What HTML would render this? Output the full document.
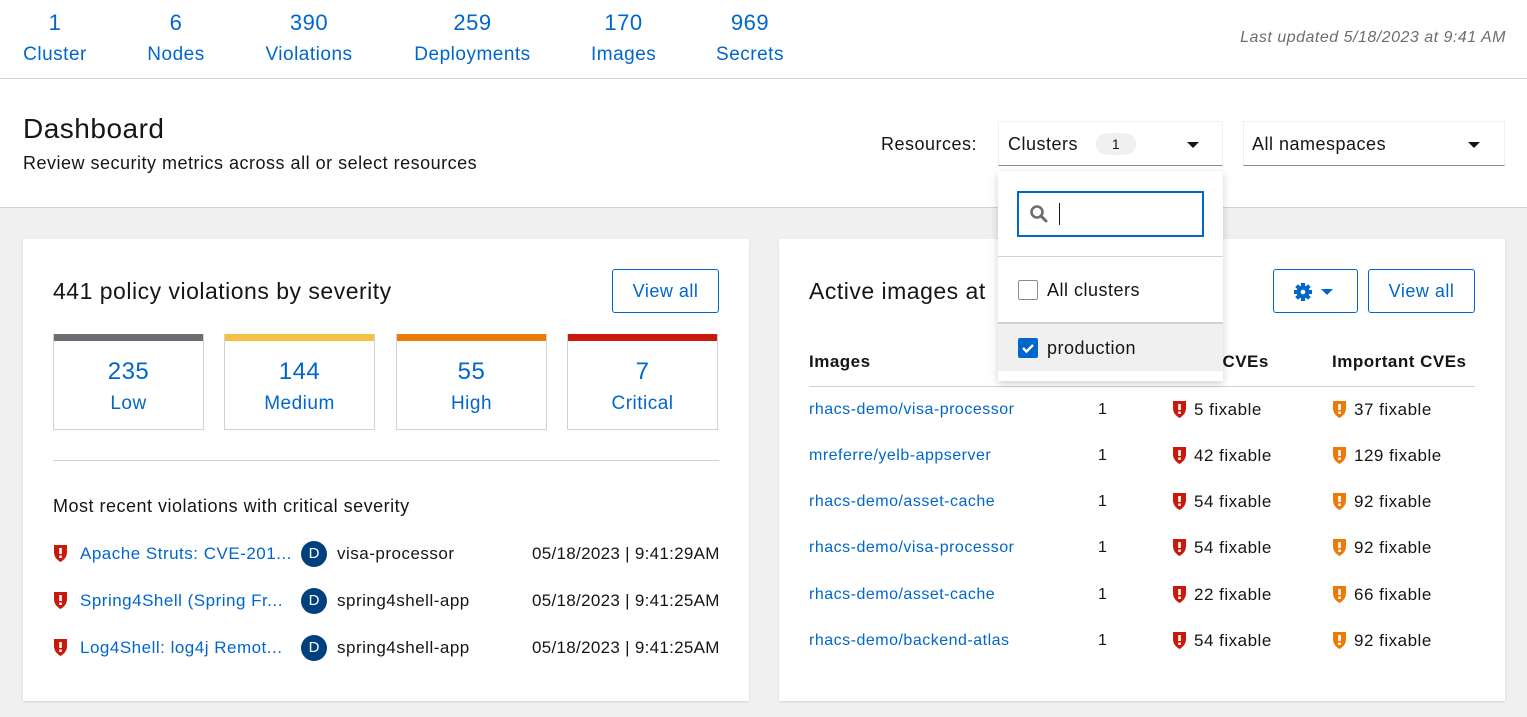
<!DOCTYPE html>
<html><head><meta charset="utf-8"><style>
*{box-sizing:border-box;margin:0;padding:0}
html{width:1527px;height:717px;overflow:hidden}
body{width:1527px;height:717px;overflow:hidden;background:#f0f0f0;font-family:"Liberation Sans",sans-serif;color:#151515;position:relative;letter-spacing:0.5px}
.a{position:absolute;white-space:nowrap}
.blue{color:#0066cc}
.top{position:absolute;left:0;top:0;width:1527px;height:79px;background:#fff;border-bottom:1px solid #d2d2d2}
.hdr{position:absolute;left:0;top:79px;width:1527px;height:129px;background:#fff;border-bottom:1px solid #d2d2d2}
.stat{position:absolute;top:10px;text-align:center;color:#0066cc}
.stat b{display:block;font-weight:normal;font-size:22px;line-height:26px}
.stat span{display:block;font-size:19px;line-height:26px;margin-top:6px}
.card{position:absolute;background:#fff;box-shadow:0 1px 2px rgba(0,0,0,.12)}
.btn{position:absolute;border:1px solid #0066cc;border-radius:3px;color:#0066cc;font-size:18px;text-align:center;line-height:42px;height:44px}
.sev{position:absolute;top:334px;width:151px;height:96px;border:1px solid #d2d2d2;border-top-width:0;text-align:center;color:#0066cc}
.sev i{display:block;height:7px}
.sev b{display:block;font-weight:normal;font-size:24px;margin-top:17px;line-height:28px}
.sev span{display:block;font-size:19px;margin-top:7px}
.t18{font-size:18px}
.t17{font-size:17px}
.dot{position:absolute;width:26px;height:26px;border-radius:50%;background:#004080;color:#fff;font-size:15px;text-align:center;line-height:26px;letter-spacing:0}
.sh{position:absolute;width:15px;height:19px}
</style></head><body>
<svg width="0" height="0" style="position:absolute"><defs>
<g id="r"><path d="M1 1h13v7c0 5-3 8-6.5 10C4 16 1 13 1 8z" fill="#c9190b"/><rect x="6.2" y="4" width="2.6" height="6" fill="#fff"/><rect x="6.2" y="11.5" width="2.6" height="2.5" fill="#fff"/></g>
<g id="o"><path d="M1 1h13v7c0 5-3 8-6.5 10C4 16 1 13 1 8z" fill="#ec7a08"/><rect x="6.2" y="4" width="2.6" height="6" fill="#fff"/><rect x="6.2" y="11.5" width="2.6" height="2.5" fill="#fff"/></g>
</defs></svg>
<div class="top">
<div class="stat" style="left:23px;width:64px"><b>1</b><span>Cluster</span></div>
<div class="stat" style="left:146px;width:60px"><b>6</b><span>Nodes</span></div>
<div class="stat" style="left:265px;width:88px"><b>390</b><span>Violations</span></div>
<div class="stat" style="left:413px;width:119px"><b>259</b><span>Deployments</span></div>
<div class="stat" style="left:591px;width:65px"><b>170</b><span>Images</span></div>
<div class="stat" style="left:716px;width:68px"><b>969</b><span>Secrets</span></div>
<div class="a" style="right:21px;top:29px;font-size:16px;font-style:italic;color:#6a6e73">Last updated 5/18/2023 at 9:41 AM</div>
</div>
<div class="hdr">
<div class="a" style="left:23px;top:34px;font-size:28px">Dashboard</div>
<div class="a" style="left:23px;top:74px;font-size:18px">Review security metrics across all or select resources</div>
<div class="a t18" style="left:881px;top:55px">Resources:</div>
<div class="a" style="left:998px;top:42px;width:225px;height:45px;border:1px solid #f0f0f0;border-bottom:1px solid #8a8d90"></div>
<div class="a t18" style="left:1008px;top:55px">Clusters</div>
<div class="a" style="left:1096px;top:54px;width:40px;height:22px;border-radius:11px;background:#f0f0f0;font-size:14px;text-align:center;line-height:22px">1</div>
<div class="a" style="left:1187px;top:63px;border:6px solid transparent;border-top:6px solid #151515;border-bottom:0"></div>
<div class="a" style="left:1243px;top:42px;width:262px;height:45px;border:1px solid #f0f0f0;border-bottom:1px solid #8a8d90"></div>
<div class="a t18" style="left:1252px;top:55px">All namespaces</div>
<div class="a" style="left:1468px;top:63px;border:6px solid transparent;border-top:6px solid #151515;border-bottom:0"></div>
</div>

<div class="card" style="left:23px;top:239px;width:726px;height:462px"></div>
<div class="a" style="left:53px;top:278px;font-size:23px">441 policy violations by severity</div>
<div class="btn" style="left:612px;top:269px;width:107px">View all</div>
<div class="sev" style="left:53px"><i style="background:#6a6e73"></i><b>235</b><span>Low</span></div>
<div class="sev" style="left:224px"><i style="background:#f4c145"></i><b>144</b><span>Medium</span></div>
<div class="sev" style="left:396px"><i style="background:#ec7a08"></i><b>55</b><span>High</span></div>
<div class="sev" style="left:567px"><i style="background:#c9190b"></i><b>7</b><span>Critical</span></div>
<div class="a" style="left:53px;top:460px;width:666px;height:1px;background:#d2d2d2"></div>
<div class="a t18" style="left:53px;top:496px">Most recent violations with critical severity</div>

<div class="a blue t17" style="left:80px;top:544px">Apache Struts: CVE-201...</div>
<div class="a blue t17" style="left:80px;top:591px">Spring4Shell (Spring Fr...</div>
<div class="a blue t17" style="left:80px;top:638px">Log4Shell: log4j Remot...</div>
<div class="dot" style="left:301px;top:541px">D</div>
<div class="dot" style="left:301px;top:588px">D</div>
<div class="dot" style="left:301px;top:635px">D</div>
<div class="a t17" style="left:337px;top:544px">visa-processor</div>
<div class="a t17" style="left:337px;top:591px">spring4shell-app</div>
<div class="a t17" style="left:337px;top:638px">spring4shell-app</div>
<div class="a t17" style="left:532px;top:544px;letter-spacing:0.3px">05/18/2023 | 9:41:29AM</div>
<div class="a t17" style="left:532px;top:591px;letter-spacing:0.3px">05/18/2023 | 9:41:25AM</div>
<div class="a t17" style="left:532px;top:638px;letter-spacing:0.3px">05/18/2023 | 9:41:25AM</div>
<svg class="sh" style="left:53px;top:544px"><use href="#r"/></svg>
<svg class="sh" style="left:53px;top:591px"><use href="#r"/></svg>
<svg class="sh" style="left:53px;top:638px"><use href="#r"/></svg>

<div class="card" style="left:779px;top:239px;width:726px;height:462px"></div>
<div class="a" style="left:809px;top:278px;font-size:23px">Active images at</div>
<div class="btn" style="left:1273px;top:269px;width:85px"><svg width="46" height="20" viewBox="0 0 46 20" style="vertical-align:middle"><g transform="translate(10,10)" fill="#0066cc"><circle r="6.5"/><g id="t"><rect x="-2" y="-9" width="4" height="18"/></g><use href="#t" transform="rotate(45)"/><use href="#t" transform="rotate(90)"/><use href="#t" transform="rotate(135)"/><circle r="2.3" fill="#fff"/></g><path d="M28 7h12l-6 6z" fill="#0066cc"/></svg></div>
<div class="btn" style="left:1368px;top:269px;width:107px">View all</div>
<div class="a" style="left:809px;top:352px;font-size:17px;font-weight:bold">Images</div>
<div class="a" style="left:1212px;top:352px;font-size:17px;font-weight:bold">l CVEs</div>
<div class="a" style="left:1332px;top:352px;font-size:17px;font-weight:bold">Important CVEs</div>
<div class="a" style="left:809px;top:386px;width:666px;height:1px;background:#d2d2d2"></div>

<div class="a blue" style="left:809px;top:401px;font-size:16px">rhacs-demo/visa-processor</div>
<div class="a blue" style="left:809px;top:447px;font-size:16px">mreferre/yelb-appserver</div>
<div class="a blue" style="left:809px;top:493px;font-size:16px">rhacs-demo/asset-cache</div>
<div class="a blue" style="left:809px;top:539px;font-size:16px">rhacs-demo/visa-processor</div>
<div class="a blue" style="left:809px;top:586px;font-size:16px">rhacs-demo/asset-cache</div>
<div class="a blue" style="left:809px;top:632px;font-size:16px">rhacs-demo/backend-atlas</div>

<div class="a" style="left:1098px;top:401px;font-size:16px">1</div>
<div class="a" style="left:1098px;top:447px;font-size:16px">1</div>
<div class="a" style="left:1098px;top:493px;font-size:16px">1</div>
<div class="a" style="left:1098px;top:539px;font-size:16px">1</div>
<div class="a" style="left:1098px;top:586px;font-size:16px">1</div>
<div class="a" style="left:1098px;top:632px;font-size:16px">1</div>

<div class="a t17" style="left:1194px;top:400px">5 fixable</div>
<div class="a t17" style="left:1194px;top:446px">42 fixable</div>
<div class="a t17" style="left:1194px;top:492px">54 fixable</div>
<div class="a t17" style="left:1194px;top:538px">54 fixable</div>
<div class="a t17" style="left:1194px;top:585px">22 fixable</div>
<div class="a t17" style="left:1194px;top:631px">54 fixable</div>
<div class="a t17" style="left:1354px;top:400px">37 fixable</div>
<div class="a t17" style="left:1354px;top:446px">129 fixable</div>
<div class="a t17" style="left:1354px;top:492px">92 fixable</div>
<div class="a t17" style="left:1354px;top:538px">92 fixable</div>
<div class="a t17" style="left:1354px;top:585px">66 fixable</div>
<div class="a t17" style="left:1354px;top:631px">92 fixable</div>

<svg class="sh" style="left:1172px;top:400px"><use href="#r"/></svg>
<svg class="sh" style="left:1172px;top:446px"><use href="#r"/></svg>
<svg class="sh" style="left:1172px;top:492px"><use href="#r"/></svg>
<svg class="sh" style="left:1172px;top:538px"><use href="#r"/></svg>
<svg class="sh" style="left:1172px;top:585px"><use href="#r"/></svg>
<svg class="sh" style="left:1172px;top:631px"><use href="#r"/></svg>
<svg class="sh" style="left:1332px;top:400px"><use href="#o"/></svg>
<svg class="sh" style="left:1332px;top:446px"><use href="#o"/></svg>
<svg class="sh" style="left:1332px;top:492px"><use href="#o"/></svg>
<svg class="sh" style="left:1332px;top:538px"><use href="#o"/></svg>
<svg class="sh" style="left:1332px;top:585px"><use href="#o"/></svg>
<svg class="sh" style="left:1332px;top:631px"><use href="#o"/></svg>

<div class="a" style="left:998px;top:171px;width:225px;height:210px;background:#fff;box-shadow:0 3px 8px rgba(0,0,0,.18)">
<div class="a" style="left:19px;top:20px;width:187px;height:46px;border:2px solid #0066cc"></div>
<svg class="a" style="left:31px;top:33px" width="20" height="20" viewBox="0 0 20 20"><circle cx="8" cy="8" r="5.5" fill="none" stroke="#6a6e73" stroke-width="2.6"/><path d="M12 12l5 5" stroke="#6a6e73" stroke-width="3" stroke-linecap="round"/></svg>
<div class="a" style="left:61px;top:32px;width:1px;height:22px;background:#151515"></div>
<div class="a" style="left:0;top:85px;width:225px;height:1px;background:#d2d2d2"></div>
<div class="a" style="left:20px;top:109px;width:20px;height:20px;border:1px solid #8a8d90;border-radius:2px"></div>
<div class="a t18" style="left:49px;top:109px">All clusters</div>
<div class="a" style="left:0;top:151px;width:225px;height:2px;background:#d2d2d2"></div>
<div class="a" style="left:0;top:153px;width:225px;height:47px;background:#f0f0f0"></div>
<div class="a" style="left:20px;top:167px;width:20px;height:20px;background:#0066cc;border-radius:2px"><svg width="20" height="20"><path d="M5 10l3.5 3.5L15 7" fill="none" stroke="#fff" stroke-width="2.4"/></svg></div>
<div class="a t18" style="left:49px;top:167px">production</div>
</div>
</body></html>
